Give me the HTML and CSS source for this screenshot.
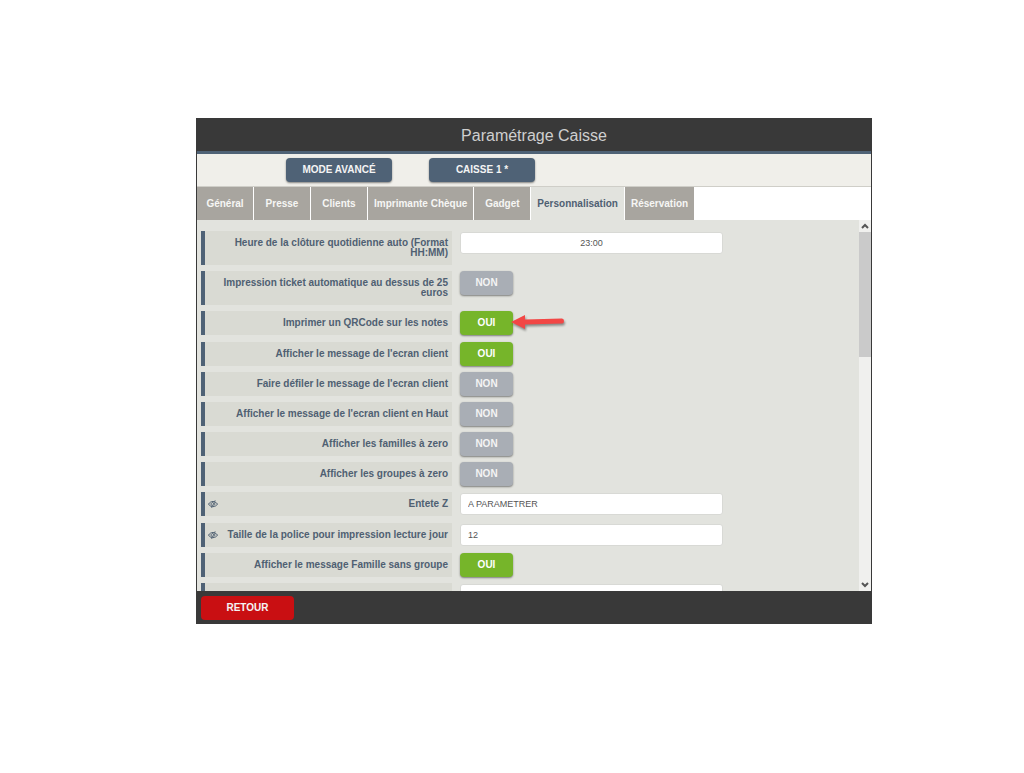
FILE: index.html
```html
<!DOCTYPE html>
<html lang="fr">
<head>
    <meta charset="UTF-8">
    <meta name="viewport" content="width=device-width, initial-scale=1.0">
    <title>Paramétrage Caisse</title>
    <link rel="stylesheet" href="styles.css">
</head>
<body>
    <svg class="defs" aria-hidden="true">
        <symbol id="eye-off" viewBox="0 0 20 16">
            <g fill="none" stroke="currentColor" stroke-width="2" stroke-linecap="round">
                <path d="M8 13.200C5 12.600 2.500 10.800 1 8.200 3 5 6.200 3 10 3h1"/>
                <path d="M14.500 4.200c1.900.9 3.500 2.200 4.500 4-1.800 3-4.800 4.900-8.500 5.100"/>
                <path d="M14 1.500 7.500 15"/>
                <path d="M9.500 5C7.500 5 6 6.500 6 8.300c0 1 .5 2 1.500 2.700M13.600 7c.5 2-.3 3.300-1.600 4"/>
            </g>
        </symbol>
    </svg>

    <div class="window">
        <header class="titlebar">
            <h1>Paramétrage Caisse</h1>
        </header>

        <div class="toolbar">
            <button class="btn btn-mode" type="button">MODE AVANCÉ</button>
            <button class="btn btn-mode" type="button">CAISSE 1 *</button>
        </div>

        <nav class="tabs">
            <a class="tab" href="#general">Général</a>
            <a class="tab" href="#presse">Presse</a>
            <a class="tab" href="#clients">Clients</a>
            <a class="tab" href="#cheque">Imprimante Chèque</a>
            <a class="tab" href="#gadget">Gadget</a>
            <a class="tab active" href="#perso">Personnalisation</a>
            <a class="tab" href="#reservation">Réservation</a>
        </nav>

        <main class="panel">
            <form class="settings">
                <div class="row tall">
                    <label for="cloture">Heure de la clôture quotidienne auto (Format HH:MM)</label>
                    <input id="cloture" class="center" type="text" value="23:00">
                </div>
                <div class="row tall">
                    <label for="ticket">Impression ticket automatique au dessus de 25 euros</label>
                    <button id="ticket" class="btn toggle" type="button">NON</button>
                </div>
                <div class="row">
                    <label for="qrcode">Imprimer un QRCode sur les notes</label>
                    <div class="pointed">
                        <button id="qrcode" class="btn toggle on" type="button">OUI</button>
                        <svg class="arrow" viewBox="0 0 54 18" aria-hidden="true">
                            <path d="M0 9 14 2V6.500L51 5.500Q53 5.500 53 8T51 10.500L14 11.500V16Z"/>
                        </svg>
                    </div>
                </div>
                <div class="row">
                    <label for="message">Afficher le message de l'ecran client</label>
                    <button id="message" class="btn toggle on" type="button">OUI</button>
                </div>
                <div class="row">
                    <label for="defiler">Faire défiler le message de l'ecran client</label>
                    <button id="defiler" class="btn toggle" type="button">NON</button>
                </div>
                <div class="row">
                    <label for="haut">Afficher le message de l'ecran client en Haut</label>
                    <button id="haut" class="btn toggle" type="button">NON</button>
                </div>
                <div class="row">
                    <label for="familles">Afficher les familles à zero</label>
                    <button id="familles" class="btn toggle" type="button">NON</button>
                </div>
                <div class="row">
                    <label for="groupes">Afficher les groupes à zero</label>
                    <button id="groupes" class="btn toggle" type="button">NON</button>
                </div>
                <div class="row">
                    <label for="entete"><svg class="eye"><use href="#eye-off"/></svg>Entete Z</label>
                    <input id="entete" type="text" value="A PARAMETRER">
                </div>
                <div class="row">
                    <label for="police"><svg class="eye"><use href="#eye-off"/></svg>Taille de la police pour impression lecture jour</label>
                    <input id="police" type="text" value="12">
                </div>
                <div class="row">
                    <label for="sansgroupe">Afficher le message Famille sans groupe</label>
                    <button id="sansgroupe" class="btn toggle on" type="button">OUI</button>
                </div>
                <div class="row">
                    <label for="suite"></label>
                    <input id="suite" type="text">
                </div>
            </form>

            <div class="scrollbar" aria-hidden="true">
                <svg class="chevron" viewBox="0 0 8 6"><path d="M1 5 4 2 7 5"/></svg>
                <div class="track"><div class="thumb"></div></div>
                <svg class="chevron" viewBox="0 0 8 6"><path d="M1 1 4 4 7 1"/></svg>
            </div>
        </main>

        <footer class="footer">
            <button class="btn btn-back" type="button">RETOUR</button>
        </footer>
    </div>
</body>
</html>
```
FILE: styles.css
```css
* {
    box-sizing: border-box;
}
body {
    margin: 0;
    padding: 118px 152px 0 196px;
    background: #fff;
    font-family: "Liberation Sans", Arial, sans-serif;
    font-size: 10px;
    color: #4f6072;
}
.defs {
    display: none;
}
.window {
    border: 1px solid #393939;
    border-width: 0 1px;
    background: #fff;
}
.titlebar {
    display: flex;
    align-items: center;
    justify-content: center;
    height: 36px;
    background: #393939;
    border-bottom: 3px solid #4f6276;
}
h1 {
    margin: 0;
    padding-top: 2px;
    font-size: 16px;
    font-weight: normal;
    color: #cfcfcf;
}
.toolbar {
    display: flex;
    align-items: center;
    gap: 37px;
    height: 33px;
    padding-left: 89px;
    background: #f0efea;
    border-bottom: 1px solid #cfcec8;
}
.btn {
    height: 24px;
    padding: 0 0 1px;
    border: none;
    border-radius: 4px;
    font-family: inherit;
    font-size: 10px;
    font-weight: bold;
    color: #f4f4f4;
    cursor: pointer;
    box-shadow: 0 1px 2px rgba(0, 0, 0, 0.45);
}
.btn-mode {
    width: 106px;
    background: #4f6276;
}
.tabs {
    display: flex;
    gap: 1px;
    height: 33px;
}
.tab {
    display: flex;
    align-items: center;
    justify-content: center;
    min-width: 56px;
    padding: 0 6px;
    background: #a8a59f;
    color: #f6f6f4;
    font-weight: bold;
    text-decoration: none;
}
.tab.active {
    background: #e2e3de;
    color: #4f6072;
}
.panel {
    display: flex;
    height: 48vh;
    overflow: hidden;
    background: #e2e3de;
}
.settings {
    flex: 1;
    display: flex;
    flex-direction: column;
    justify-content: space-between;
    min-height: 387px;
    padding: 11px 4px 0;
}
.row {
    display: grid;
    grid-template-columns: 251fr 263fr 124fr;
    column-gap: 8px;
    align-items: start;
    min-height: 24px;
}
.row.tall {
    min-height: 34px;
}
label {
    display: flex;
    align-items: center;
    justify-content: flex-end;
    align-self: stretch;
    padding: 0 4px 0 16px;
    border-left: 4px solid #4f6276;
    background: #d9dad3;
    font-weight: bold;
    line-height: 10px;
    text-align: right;
}
.eye {
    flex: none;
    width: 10px;
    height: 8px;
    margin-left: -13px;
    margin-right: auto;
}
input {
    width: 100%;
    height: 22px;
    margin-top: 1px;
    padding: 0 7px;
    border: 1px solid #d8d9d5;
    border-radius: 3px;
    background: #fff;
    font-family: inherit;
    font-size: 9px;
    color: #555;
}
input.center {
    text-align: center;
}
.toggle {
    width: 53px;
    background: #a9aeb5;
}
.toggle.on {
    background: #76b52a;
    color: #fff;
}
.pointed {
    position: relative;
}
.arrow {
    position: absolute;
    left: 51px;
    top: 2px;
    width: 54px;
    height: 18px;
    fill: #f24745;
    filter: drop-shadow(1px 2px 1px rgba(0, 0, 0, 0.4));
}
.scrollbar {
    display: flex;
    flex-direction: column;
    width: 12px;
    background: #f0f0ee;
}
.chevron {
    width: 8px;
    height: 12px;
    margin: 0 2px;
    fill: none;
    stroke: #555;
    stroke-width: 2;
}
.track {
    flex: 1;
}
.thumb {
    height: 36%;
    background: #cacaca;
}
.footer {
    display: flex;
    align-items: center;
    height: 33px;
    padding-left: 4px;
    background: #393939;
}
.btn-back {
    width: 93px;
    background: #c90f12;
    box-shadow: none;
}
```
